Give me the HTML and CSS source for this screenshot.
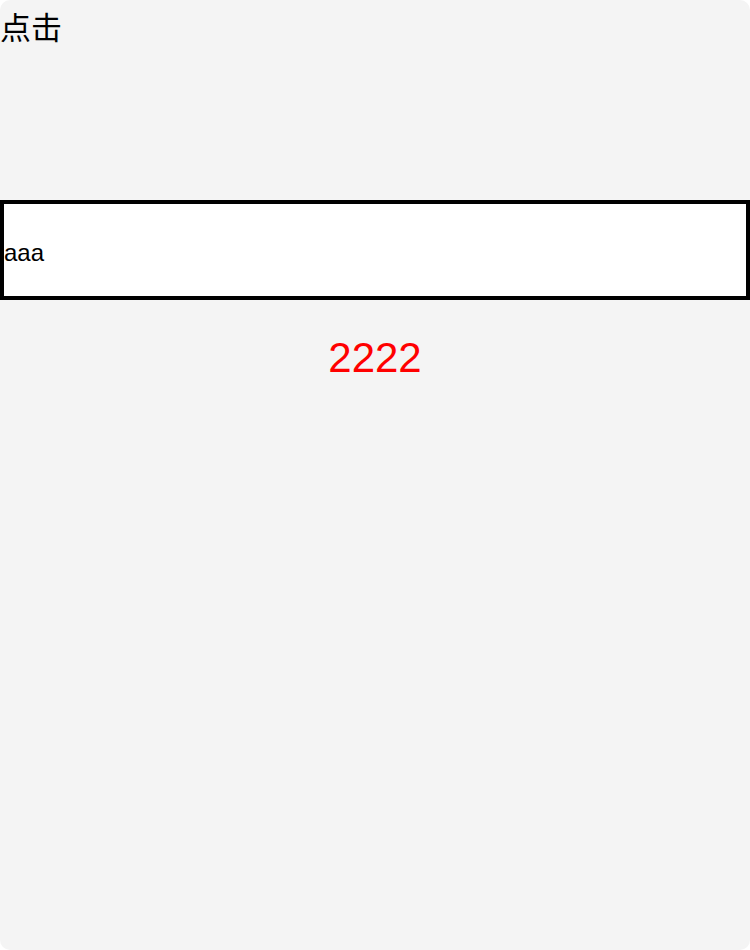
FILE: index.html
```html
<!DOCTYPE html>
<html lang="zh">
<head>
    <meta charset="UTF-8">
    <meta name="viewport" content="width=device-width, initial-scale=1.0">
    <title>点击</title>
    <link rel="stylesheet" href="styles.css">
</head>
<body>
    <div class="page">
        <div class="title">点击</div>

        <div class="field">
            <span class="field-text">aaa</span>
        </div>

        <div class="count">2222</div>
    </div>
</body>
</html>
```

FILE: styles.css
```css
body {
    margin: 0;
    padding: 0;
    background-color: #FFFFFF;
    font-family: "Liberation Sans", "Noto Sans CJK SC", Arial, sans-serif;
    color: #000000;
}

.page {
    min-height: 950px;
    background-color: #F4F4F4;
    border-radius: 10px;
    overflow: hidden;
}

.title {
    font-size: 31px;
    line-height: 58px;
    height: 58px;
}

.field {
    margin-top: 142px;
    height: 92px;
    border: 4px solid #000000;
    background-color: #FFFFFF;
    display: flex;
    align-items: center;
}

.field-text {
    font-size: 24px;
    padding-top: 6px;
}

.count {
    margin-top: 34px;
    text-align: center;
    font-size: 42px;
    color: #FF0000;
}
```
